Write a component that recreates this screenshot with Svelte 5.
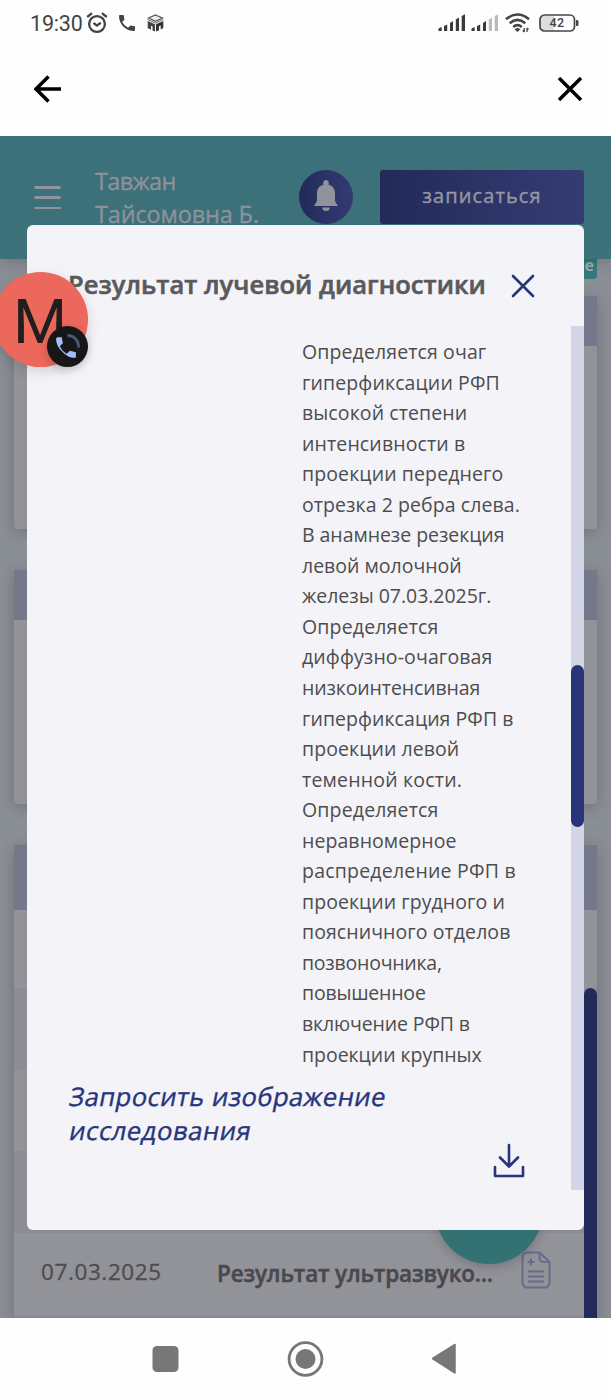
<script>
  const lines = [
    ['Определяется очаг', 184], ['гиперфиксации РФП', 198], ['высокой степени', 165.5],
    ['интенсивности в', 163], ['проекции переднего', 201], ['отрезка 2 ребра слева.', 217.5],
    ['В анамнезе резекция', 202], ['левой молочной', 160], ['железы 07.03.2025г.', 189.5],
    ['Определяется', 137], ['диффузно-очаговая', 190], ['низкоинтенсивная', 178],
    ['гиперфиксация РФП в', 212], ['проекции левой', 157], ['теменной кости.', 160],
    ['Определяется', 137], ['неравномерное', 155], ['распределение РФП в', 214],
    ['проекции грудного и', 203], ['поясничного отделов', 208.5], ['позвоночника,', 140],
    ['повышенное', 124], ['включение РФП в', 168], ['проекции крупных', 179.5]
  ];

  // Tracks a line of text so that it spans the given width.
  function fit(node, width) {
    const spacing = (width - node.offsetWidth) / node.textContent.length;
    node.style.letterSpacing = spacing + 'px';
  }
</script>

<div class="phone">
  <div class="status">
    <span class="clock" use:fit={53}>19:30</span>
    <svg class="alarm" width="22" height="22" viewBox="0 0 22 22" fill="none" stroke="#444" stroke-width="2.300">
      <circle cx="11" cy="12" r="7.900" /><path d="M1.200 5 6 1.200M20.800 5 16 1.200" /><path d="m7.500 10.800 3.300 2.800 4-2.800" />
    </svg>
    <svg class="call" width="16" height="16" viewBox="3 3 18 18" fill="#444"><path d="M20 15.500c-1.250 0-2.450-.2-3.570-.57a1 1 0 0 0-1.020.24l-2.200 2.200a15.050 15.050 0 0 1-6.590-6.590l2.200-2.200a1 1 0 0 0 .25-1.020A11.400 11.400 0 0 1 8.500 4a1 1 0 0 0-1-1H4a1 1 0 0 0-1 1c0 9.390 7.610 17 17 17a1 1 0 0 0 1-1v-3.500a1 1 0 0 0-1-1z" /></svg>
    <svg class="cube" width="17" height="18" viewBox="0 0 17 18">
      <path d="M8.500 1 15.500 4 8.500 7.300 1.500 4z" fill="#eee" stroke="#555" stroke-width="1.300" />
      <path d="m.7 5.500 7.800 3.600 7.800-3.600" fill="none" stroke="#666" stroke-width="1" />
      <path d="M.7 7 8 10.300v7.300L5.500 16.400v-4l-1.500-.7v4L.7 14z" fill="#444" /><path d="M16.300 7 9 10.300v7.300l3-1.400v-4l1.700-.8v4l2.600-1.400z" fill="#333" />
    </svg>
    <span class="grow"></span>
    <svg width="27" height="18" viewBox="0 0 27 18" fill="#3b3b3b"><path d="M.5 14.500 3.700 13v4H.5zM6 12l3.200-1.500V17H6zM12 9l3-2v10h-3zM17.800 5.500l3.200-2V17h-3.200zM23.700 2 27 .3V17h-3.300z" /></svg>
    <svg class="sig2" width="27" height="18" viewBox="0 0 27 18" fill="#3b3b3b"><path d="M.5 14.500 3.700 13v4H.5zM6 12l3.200-1.500V17H6zM12 9l3-2v10h-3z" /><path fill="#bbb" d="M17.800 5.500l3.200-2V17h-3.200zM23.700 2 27 .3V17h-3.300z" /></svg>
    <svg class="wifi" width="26" height="20" viewBox="0 0 26 20" fill="none" stroke="#444" stroke-width="2.600">
      <path d="M1 6.200Q12.500-3.200 24 6.200M4.700 10.200Q12.500 3.600 20.300 10.200M8.300 14Q12.500 10.400 16.700 14" /><path d="m9.500 16.200 3-1.500 3 1.500-3 2.800z" fill="#444" stroke="none" />
      <path d="M19.300 15v3.800M17.800 17.300l1.500 1.700M22 19v-4M23.500 16.500 22 15" stroke-width="1.300" />
    </svg>
    <svg class="battery" width="41" height="18" viewBox="0 0 41 18">
      <path d="M5 2h10v14H5a3 3 0 0 1-3-3V5a3 3 0 0 1 3-3z" fill="#ddd" /><rect x="1" y="1" width="34.500" height="16" rx="4.500" fill="none" stroke="#444" stroke-width="1.700" />
      <path d="M37 6h1a1.500 1.500 0 0 1 1.500 1.500v3A1.500 1.500 0 0 1 38 12h-1z" fill="#444" /><text x="18" y="13.300" text-anchor="middle">42</text>
    </svg>
  </div>
  <div class="nav">
    <svg width="28" height="28" viewBox="0 0 28 28"><path d="M27 14H2M14.500 1.500 2 14 14.500 26.500" /></svg>
    <svg width="24" height="24" viewBox="0 0 24 24"><path d="m1 1 22 22M23 1 1 23" /></svg>
  </div>

  <main>
    <header>
      <div class="burger"><i></i><i></i><i></i></div>
      <div class="user"><span use:fit={81}>Тавжан</span><br /><span use:fit={164}>Тайсомовна Б.</span></div>
      <div class="bell"><svg width="24" height="31" viewBox="0 0 24 31"><path d="M12 0a2.800 2.800 0 0 1 2.300 4.400C18.500 5.500 21 8.500 21 13v7c0 2 1.500 3.500 3 6H0c1.500-2.500 3-4 3-6v-7c0-4.500 2.500-7.500 6.700-8.600A2.800 2.800 0 0 1 12 0zM8 27.500h8Q15.300 31 12 31t-4-3.500z" /></svg></div>
      <button class="book"><span use:fit={119}>записаться</span></button>
    </header>
    <div class="tag">е</div>
    <section class="card"><div class="head"></div></section>
    <section class="card second"><div class="head"></div></section>
    <section class="card list">
      <div class="head tall"></div>
      <div class="row first"></div><div class="row dark"></div><div class="row"></div><div class="row dark"></div>
      <div class="row result">
        <span class="date"><span use:fit={121}>07.03.2025</span></span>
        <b><span use:fit={276}>Результат ультразвуко...</span></b>
        <svg width="30" height="38" viewBox="0 0 30 38"><path d="M6 1.500h12.500L28.500 11v21a4.500 4.500 0 0 1-4.500 4.500H6A4.500 4.500 0 0 1 1.500 32V6A4.500 4.500 0 0 1 6 1.500zM18.500 1.500V7a4 4 0 0 0 4 4h6M10 7.500v7M6.500 11h7M7 20.500h16M7 25.500h16M7 30.500h16" /></svg>
      </div>
      <div class="track"></div>
    </section>
    <div class="fab"></div>
  </main>

  <footer>
    <svg width="290" height="40" viewBox="0 0 290 40" fill="#777"><rect x="2.500" y="8" width="26" height="26" rx="4.500" /><circle cx="155.500" cy="21" r="16.400" fill="none" stroke="#777" stroke-width="2.800" /><circle cx="155.500" cy="21" r="10" /></svg>
    <svg class="back" width="26" height="32" viewBox="0 0 26 32"><path d="M1.500 15.500 24 1.500v28.500z" fill="#777" stroke="#777" stroke-linejoin="round" stroke-width="1.500" /></svg>
  </footer>

  <div class="modal">
    <div class="title">
      <h2><span use:fit={418}>Результат лучевой диагностики</span></h2>
      <svg width="24" height="24" viewBox="0 0 24 24"><path d="m2 2 20 20M22 2 2 22" /></svg>
    </div>
    <div class="body">
      <div class="content">
        <div class="text">{#each lines as [text, width]}<p><span use:fit={width}>{text}</span></p>{/each}</div>
        <div class="actions">
          <div class="request"><span use:fit={316}>Запросить изображение</span><br /><span use:fit={182}>исследования</span></div>
          <svg width="32" height="35" viewBox="0 0 32 35"><path d="M16 2v21M7 14.500l9 9 9-9M2 24v9h28v-9" /></svg>
        </div>
      </div>
      <div class="bar"><div class="thumb"></div></div>
    </div>
  </div>

  <div class="bubble"><span>М</span>
    <div class="badge"><svg width="24" height="26" viewBox="0 0 24 26"><path d="M0 5 1 3.300h4.700l1.200 6-3.200 3q2.500 5 7 7.500l3.200-3 6 1.400v5.300Q14 25 7 18.500T0 5z" fill="#9fc0fa" /><path d="M11.500 1.500a11 11 0 0 1 11 12" fill="none" stroke="#46597a" stroke-width="2.800" /></svg></div>
  </div>
</div>

<style>
  :global(body) { margin: 0; background: #fefefe; }
  .phone { position: relative; width: 611px; height: 1400px; overflow: hidden; background: #fefefe; font-family: "Open Sans", "Noto Sans", sans-serif; color: #4d4d4f; }
  .phone * { box-sizing: border-box; }
  span { display: inline-block; white-space: nowrap; }
  svg { display: block; flex: none; }
  .status { height: 46px; padding: 0 32px 0 30px; display: flex; align-items: center; }
  .clock { font: 21.500px/46px Roboto, sans-serif; color: #444; padding-top: 2px; }
  .alarm { margin-left: 3px; }
  .call { margin-left: 11px; }
  .cube { margin-left: 12px; }
  .grow { flex: 1; }
  .sig2 { margin-left: 6px; }
  .wifi { margin-left: 7px; }
  .battery { margin-left: 8px; margin-right: -1px; }
  .battery text { font: 500 12.500px Roboto, sans-serif; letter-spacing: .5px; fill: #444; }
  .nav { height: 90px; padding: 0 29px 4px 34px; display: flex; align-items: center; justify-content: space-between; }
  .nav path { fill: none; stroke: #000; stroke-width: 3.500; }
  main { height: 1182px; background: #8a8e95; overflow: hidden; position: relative; z-index: 0; display: flex; flex-direction: column; }
  header { flex: none; height: 123px; padding-left: 34px; display: flex; background: linear-gradient(#3c707a, #3d727a); box-shadow: 0 2px 16px #0003; position: relative; z-index: 1; }
  .burger { flex: none; width: 27px; margin-top: 50px; display: flex; flex-direction: column; gap: 7.500px; }
  .burger i { height: 2.800px; border-radius: 2px; background: #8f939b; }
  .user { flex: none; width: 238px; padding: 29px 0 0 34px; font-size: 23.500px; line-height: 33px; color: #8f929a; -webkit-text-stroke: .3px #8f929a; }
  .bell { flex: none; width: 54px; height: 54px; margin-top: 34px; border-radius: 50%; background: linear-gradient(90deg, #222a58, #343b74); display: grid; place-items: center; padding-bottom: 3px; }
  .bell path { fill: #90939d; }
  .book { flex: none; width: 204px; height: 54px; margin: 34px 0 0 27px; padding: 0 0 3px; border: 0; border-radius: 3px; background: linear-gradient(90deg, #232a58, #353c74); color: #9597a4; font: 500 20px "Open Sans", sans-serif; -webkit-text-stroke: .4px #9597a4; }
  .tag { flex: none; align-self: flex-end; width: 90px; height: 20px; margin-right: 14px; padding-right: 3px; border-radius: 0 0 4px 4px; background: #347c7b; color: #9ab0b0; font-weight: 700; font-size: 16px; line-height: 13px; text-align: right; }
  .card { flex: none; margin: 17px 14px 0; height: 233px; background: #929299; border-radius: 0 0 4px 4px; box-shadow: 0 3px 16px #0003; }
  .second { margin-top: 41px; height: 234px; }
  .head { height: 50px; background: #75788b; }
  .list { margin-top: 41px; height: 480px; position: relative; }
  .tall { height: 65px; }
  .row { height: 81.500px; }
  .row.first { height: 78px; }
  .row.dark { background: #8b8c96; }
  .result { padding-left: 27px; display: flex; align-items: center; border-bottom: 2px solid #888894; height: 85px; }
  .date { width: 176px; font-size: 22.500px; padding-bottom: 5px; -webkit-text-stroke: .3px #4d4d4f; }
  .result b { width: 304px; font-size: 22.500px; font-weight: 600; -webkit-text-stroke: .5px #48484d; color: #48484d; padding-bottom: 1px; }
  .result svg { margin-bottom: 9px; }
  .result path { fill: none; stroke: #686b8b; stroke-width: 2; }
  .track { position: absolute; right: 0; top: 143px; width: 13.500px; height: 400px; border-radius: 7px; background: #212a58; }
  .fab { position: absolute; left: 435px; top: 1020px; width: 108px; height: 108px; border-radius: 50%; background: #347173; box-shadow: 0 3px 12px #0003; }
  footer { height: 82px; padding: 20px 0 0 150px; display: flex; }
  .back { margin: 5px 0 0 -9px; }
  .modal { position: absolute; left: 27px; top: 225px; width: 557px; height: 1005px; background: #f3f3f8; border-radius: 6px; display: flex; flex-direction: column; }
  .title { height: 101px; padding: 20px 49px 0 41px; display: flex; justify-content: space-between; align-items: center; }
  .title h2 { margin: -3px 0 0; font-size: 25.500px; font-weight: 600; -webkit-text-stroke: .6px #5a5a5c; line-height: 36px; color: #5a5a5c; }
  .title path, .actions path { fill: none; stroke: #27357c; stroke-width: 2.600; stroke-linecap: round; stroke-linejoin: round; }
  .body { height: 864px; display: flex; }
  .content { flex: 1; padding: 11px 46px 0 41px; }
  .text { margin-left: 234px; font-size: 19.500px; line-height: 30.560px; }
  .text p { margin: 0; height: 30.560px; }
  .actions { display: flex; justify-content: space-between; margin-top: 10px; }
  .request { width: 330px; margin-top: -1px; padding-left: 1.500px; font-size: 25.500px; line-height: 34px; color: #27357c; -webkit-text-stroke: .4px #27357c; }
  .request span { transform: skewX(-11deg); }
  .actions svg { margin-top: 63px; }
  .bar { width: 13.500px; padding-top: 339px; background: #d2d6e6; }
  .thumb { height: 162px; border-radius: 7px; background: #273479; }
  .bubble { position: absolute; left: -7px; top: 272px; width: 95px; height: 95px; border-radius: 50%; background: #ec675c; box-shadow: 0 5px 14px #0002; }
  .bubble > span { position: absolute; left: 20px; top: 14px; font: 62px/72px Roboto, sans-serif; color: #201f1e; }
  .badge { position: absolute; right: 0; bottom: 0; width: 41px; height: 41px; border-radius: 50%; background: #171717; display: grid; place-items: center; box-shadow: 0 3px 10px #0003; }
</style>
